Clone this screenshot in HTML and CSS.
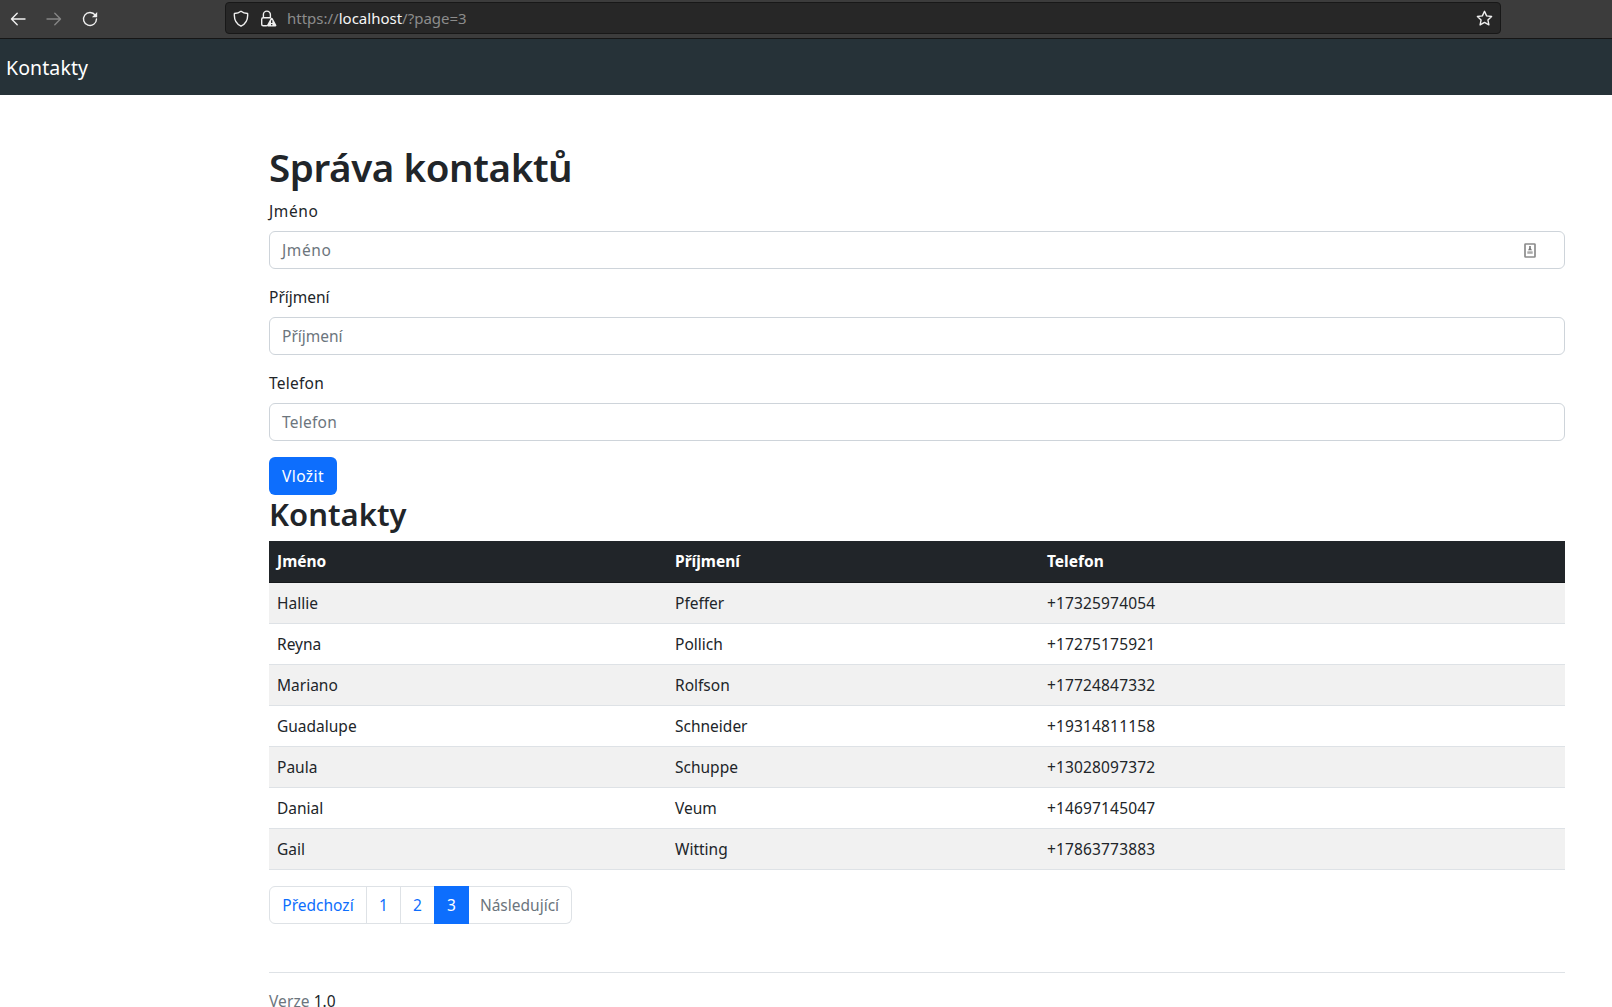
FILE: index.html
```html
<!DOCTYPE html>
<html lang="cs">
<head>
<meta charset="utf-8">
<title>Kontakty</title>
<link rel="stylesheet" href="styles.css">
</head>
<body>
<div class="toolbar">
  <div class="nav-buttons">
    <svg class="icon" width="16" height="16" viewBox="0 0 16 16"><path d="M15 8H1.6M7.2 2.2 1.5 8l5.700 5.800"/></svg>
    <svg class="icon icon-dim" width="16" height="16" viewBox="0 0 16 16"><path d="M1 8h13.400M8.800 2.200 14.500 8l-5.700 5.800"/></svg>
    <svg class="icon" width="16" height="16" viewBox="0 0 16 16"><path d="M13.300 4.200A6.500 6.500 0 1 0 14.500 8"/><path class="solid" d="M15.200 1v4.900a.4.4 0 0 1-.4.4H9.900z"/></svg>
  </div>
  <div class="urlbar">
    <svg class="icon" width="16" height="17" viewBox="0 0 16 17"><path d="M8 1.200c2 1.500 4.300 2.100 6.600 2.300.5 5.600-1.600 10.200-6.600 12.700C3 13.700.9 9.100 1.400 3.500 3.700 3.300 6 2.700 8 1.200z"/></svg>
    <svg class="icon icon-lock" width="17" height="17" viewBox="0 0 17 17"><path d="M6.500 15.700H3.200c-.9 0-1.500-.6-1.500-1.500V9.300c0-.9.600-1.500 1.500-1.500h7.300M3.400 7.500V4.600a3.500 3.500 0 0 1 7 0v3"/><path class="solid" d="M11.700 7.700c.4 0 .7.200.9.600l3.700 6.600c.3.700-.1 1.500-.9 1.500H8c-.8 0-1.200-.8-.9-1.500l3.700-6.600c.2-.4.500-.6.900-.6z"/><path class="mark" d="M11.700 10.300v2.700M11.700 14v1.300"/></svg>
    <span class="url">https://<b>localhost</b>/?page=3</span>
    <svg class="icon icon-star" width="17" height="17" viewBox="0 0 17 17"><path d="m8.500 1.300 2.100 4.600 5 .6-3.700 3.400 1 5-4.400-2.500-4.400 2.500 1-5L1.400 6.500l5-.6z"/></svg>
  </div>
</div>
<nav class="navbar"><span class="brand">Kontakty</span></nav>
<main class="content">
  <h1>Správa kontaktů</h1>
  <form>
    <div class="field">
      <label class="wide">Jméno</label>
      <div class="control"><span class="wide">Jméno</span>
        <svg width="12" height="15" viewBox="0 0 12 15"><rect x="1" y="1" width="10" height="13" rx=".6" fill="#fff" stroke="#8c8c8c" stroke-width="1.700"/><path d="M5.200 3h1.600v2.200L8 7.300H4l1.200-2.100z" fill="#777"/><path d="M3.300 8.300h5.400v2.500H3.300z" fill="#aaa"/></svg>
      </div>
    </div>
    <div class="field">
      <label>Příjmení</label>
      <div class="control"><span>Příjmení</span></div>
    </div>
    <div class="field">
      <label class="spaced">Telefon</label>
      <div class="control"><span class="spaced">Telefon</span></div>
    </div>
    <button class="btn" type="button">Vložit</button>
  </form>
  <h2>Kontakty</h2>
  <table>
    <colgroup><col class="col-first"><col class="col-last"><col></colgroup>
    <thead><tr><th>Jméno</th><th>Příjmení</th><th>Telefon</th></tr></thead>
    <tbody>
      <tr><td>Hallie</td><td>Pfeffer</td><td>+17325974054</td></tr>
      <tr><td>Reyna</td><td>Pollich</td><td>+17275175921</td></tr>
      <tr><td>Mariano</td><td>Rolfson</td><td>+17724847332</td></tr>
      <tr><td>Guadalupe</td><td>Schneider</td><td>+19314811158</td></tr>
      <tr><td>Paula</td><td>Schuppe</td><td>+13028097372</td></tr>
      <tr><td>Danial</td><td>Veum</td><td>+14697145047</td></tr>
      <tr><td>Gail</td><td>Witting</td><td>+17863773883</td></tr>
    </tbody>
  </table>
  <ul class="pagination">
    <li class="prev">Předchozí</li>
    <li>1</li>
    <li>2</li>
    <li class="active">3</li>
    <li class="next disabled">Následující</li>
  </ul>
  <footer><span class="muted">Verze</span> 1.0</footer>
</main>
</body>
</html>
```
FILE: styles.css
```css
* { box-sizing: border-box; }

body {
  margin: 0;
  height: 1007px;
  overflow: hidden;
  background: #fff;
  color: #212529;
  font: 400 15.5px/24px "Noto Sans", "Open Sans", sans-serif;
}

.toolbar {
  display: flex;
  height: 39px;
  padding-top: 2px;
  background: #3c3c3c;
  border-bottom: 1px solid #161616;
}

.nav-buttons {
  display: flex;
  gap: 20px;
  width: 225px;
  padding: 9px 0 0 10px;
}

.icon { fill: none; stroke: #f0f0f0; stroke-width: 1.4; stroke-linejoin: round; stroke-linecap: round; flex: none; }
.icon .solid { fill: #f0f0f0; stroke: none; }
.icon .mark { stroke: #272727; stroke-width: 1.3; stroke-linecap: butt; }
.icon-dim { stroke: #858585; }

.urlbar {
  display: flex;
  align-items: center;
  width: 1276px;
  height: 32px;
  padding: 0 7px;
  background: #272727;
  border: 1px solid #181818;
  border-radius: 4px;
}

.icon-lock { margin-left: 11px; }
.icon-star { margin-left: auto; }
.url { margin-left: 10px; padding-bottom: 1px; color: #8c8c8c; font-size: 15px; }
.url b { color: #f6f6f6; font-weight: 400; }

.navbar {
  display: flex;
  align-items: center;
  height: 56px;
  padding: 2px 0 0 6px;
  background: #263238;
}

.brand { color: #fff; font-size: 19.5px; letter-spacing: .1px; line-height: 30px; }

.content { margin: 0 47px 0 269px; padding-top: 48px; }

h1, h2 { margin: 0 0 8px; font-weight: 600; }
h1 { font-size: 38.5px; line-height: 48px; letter-spacing: -.4px; }
h2 { font-size: 31px; line-height: 38px; letter-spacing: 0; }

.field { margin-bottom: 16px; }
label { display: block; margin-bottom: 8px; }
.wide { letter-spacing: .6px; }
.spaced { letter-spacing: .25px; }

.control {
  display: flex;
  align-items: center;
  justify-content: space-between;
  height: 38px;
  padding: 0 28px 0 12px;
  border: 1px solid #ced4da;
  border-radius: 6px;
  color: #6c757d;
}

.btn {
  display: block;
  width: 68px;
  height: 38px;
  padding: 0;
  border: 0;
  border-radius: 6px;
  background: #0d6efd;
  color: #fff;
  font: inherit;
  letter-spacing: .4px;
}

table {
  width: 100%;
  margin-bottom: 16px;
  table-layout: fixed;
  border-collapse: separate;
  border-spacing: 0;
}

.col-first { width: 398px; }
.col-last { width: 372px; }
th, td { height: 41px; padding: 8px; text-align: left; border-bottom: 1px solid #dee2e6; }
th { height: 42px; padding: 7px 8px 9px; background: #212529; color: #fff; font-weight: 700; border-color: #16191c; }
td:last-child { letter-spacing: .15px; }
tbody tr:nth-child(odd) { background: #f1f1f1; }

.pagination { display: flex; margin: 0 0 48px; padding: 0; list-style: none; }
.pagination li {
  width: 35px;
  height: 38px;
  margin-left: -1px;
  padding: 6px 0;
  border: 1px solid #dee2e6;
  color: #0d6efd;
  text-align: center;
}
.pagination .prev { width: 98px; margin-left: 0; border-radius: 6px 0 0 6px; }
.pagination .active { z-index: 1; background: #0d6efd; border-color: #0d6efd; color: #fff; }
.pagination .next { width: 104px; border-radius: 0 6px 6px 0; border-left: 0; }
.pagination .disabled { color: #6c757d; }

footer { padding-top: 16px; border-top: 1px solid #dee2e6; }
.muted { color: #6c757d; letter-spacing: .1px; }
```
